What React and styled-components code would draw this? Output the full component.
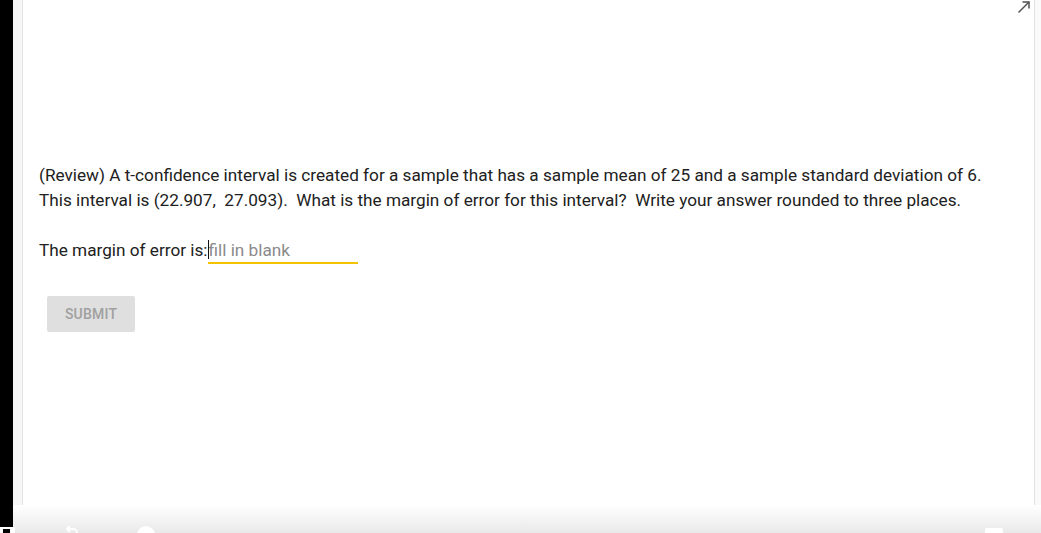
import React from 'react';
import styled, { createGlobalStyle } from 'styled-components';

const GlobalStyle = createGlobalStyle`
  html, body {
    margin: 0;
    padding: 0;
    height: 100%;
    overflow: hidden;
    background: #fff;
  }
  #root {
    height: 100%;
  }
`;

const Page = styled.div`
  display: flex;
  height: 100vh;
  font-family: Roboto, 'Liberation Sans', sans-serif;
`;

const Rail = styled.div`
  width: 13px;
  background: #000;
`;

const Gutter = styled.div`
  width: 9px;
  background: #f7f7f7;
`;

const Card = styled.main`
  position: relative;
  flex: 1;
  border-left: 1px solid #e2e2e2;
  border-right: 1px solid #e2e2e2;
  background: #fff;
  padding: 163px 16px 0;
`;

const Spacer = styled.div`
  width: 6px;
  background: #fafafa;
`;

const Expand = styled.svg`
  position: absolute;
  top: 0;
  right: 3px;
  width: 14px;
  height: 14px;
  color: #505050;
`;

const Question = styled.p`
  margin: 0;
  font-size: 17.2px;
  line-height: 25px;
  color: #212121;
`;

const Blank = styled.p`
  display: flex;
  align-items: center;
  margin: 24px 0 0;
  font-size: 17.2px;
  line-height: 25px;
  color: #212121;
`;

const Field = styled.span`
  position: relative;
  display: inline-flex;

  &::before {
    content: '';
    position: absolute;
    left: 0;
    top: 3px;
    width: 1px;
    height: 19px;
    background: #111;
  }
`;

const Input = styled.input`
  width: 149px;
  height: 25px;
  margin: 0;
  padding: 0 0 0 1px;
  border: 0;
  border-bottom: 2px solid #f4c300;
  box-sizing: content-box;
  outline: none;
  font-family: inherit;
  font-size: 17.2px;
  color: #212121;
  background: transparent;

  &::placeholder {
    color: #8a8a8a;
  }
`;

const Submit = styled.button`
  margin: 32px 0 0 8px;
  width: 88px;
  height: 36px;
  border: 0;
  border-radius: 2px;
  background: #dfdfdf;
  color: #a0a0a0;
  font-family: inherit;
  font-size: 14px;
  font-weight: 500;
  letter-spacing: 0.2px;
  text-transform: uppercase;
`;

const Dock = styled.div`
  position: fixed;
  left: 13px;
  right: 0;
  bottom: 0;
  height: 28px;
  background: linear-gradient(#fff, #e9e9e9);
`;

const Corner = styled.div`
  position: fixed;
  left: 0;
  bottom: 0;
  width: 15px;
  height: 6px;
  background: #fff;
  border-top-right-radius: 2px;

  &::after {
    content: '';
    position: absolute;
    left: 3px;
    top: 2px;
    width: 7px;
    height: 4px;
    background: #000;
  }
`;

const DockIcon = styled.svg`
  position: fixed;
  bottom: 0;
  left: ${(p) => p.$left}px;
  width: ${(p) => p.$size}px;
  height: 8px;
  color: #fff;
`;

const Tab = styled.div`
  position: fixed;
  left: 985px;
  bottom: 0;
  width: 18px;
  height: 5px;
  background: #fff;
  border-radius: 2px 2px 0 0;
`;

export default function App() {
  return (
    <>
      <GlobalStyle />
      <Page>
        <Rail />
        <Gutter />
        <Card>
          <Expand viewBox="0 0 14 14" fill="none" stroke="currentColor" strokeWidth="1.5">
            <path d="M1.5 12.5L12 2" />
            <path d="M5.5 2h6.5v6.5" />
          </Expand>
          <Question>
            (Review) A t-confidence interval is created for a sample that has a sample mean of 25 and a sample standard deviation of 6.
            <br />
            This interval is (22.907,&nbsp; 27.093).&nbsp; What is the margin of error for this interval?&nbsp; Write your answer rounded to three places.
          </Question>
          <Blank>
            The margin of error is:
            <Field>
              <Input placeholder="fill in blank" />
            </Field>
          </Blank>
          <Submit disabled>Submit</Submit>
        </Card>
        <Spacer />
      </Page>
      <Dock />
      <Corner />
      <DockIcon $left={66} $size={12} viewBox="0 0 12 8" fill="none" stroke="currentColor" strokeWidth="2">
        <path d="M4 1L1 4l3 3M1 4h6a4 4 0 0 1 4 4" />
      </DockIcon>
      <DockIcon $left={136} $size={20} viewBox="0 0 20 8">
        <circle cx="10" cy="10" r="9" fill="currentColor" />
      </DockIcon>
      <Tab />
    </>
  );
}
